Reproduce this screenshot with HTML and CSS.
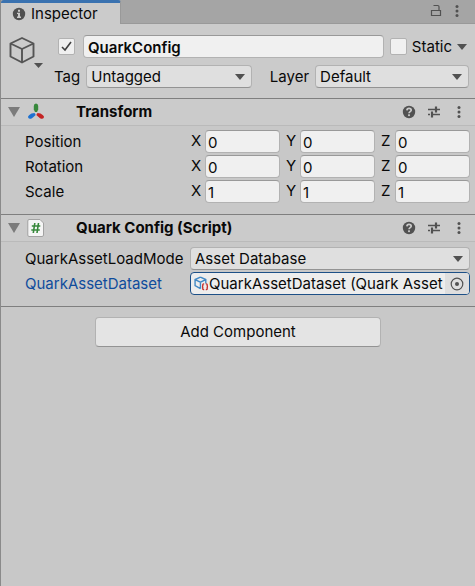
FILE: index.html
```html
<!DOCTYPE html>
<html lang="en">
<head>
<meta charset="utf-8">
<meta name="viewport" content="width=device-width, initial-scale=1">
<title>Inspector</title>
<link rel="stylesheet" href="styles.css">
</head>
<body>
<svg class="defs" aria-hidden="true">
  <symbol id="help" viewBox="0 0 14 14">
    <circle cx="7" cy="7" r="6.2" fill="#515151"/>
    <path d="M4.900 5.400C5 4 5.900 3.400 7 3.400c1.300 0 2.200.7 2.200 1.800C9.200 6.600 7 6.600 7 8.300" fill="none" stroke="#cbcbcb" stroke-width="1.700"/>
    <rect x="6.100" y="9.300" width="1.800" height="1.800" fill="#cbcbcb"/>
  </symbol>
  <symbol id="sliders" viewBox="0 0 14 14">
    <path d="M1 4.500h7M10 4.500h3M1 9.500h2M6 9.500h7" stroke="#515151" stroke-width="1.400"/>
    <path d="M9 1.500v6M5 6.500v6" stroke="#515151" stroke-width="2.200"/>
  </symbol>
  <symbol id="dots" viewBox="0 0 14 14">
    <g fill="#515151"><circle cx="7" cy="2.500" r="1.500"/><circle cx="7" cy="7" r="1.500"/><circle cx="7" cy="11.500" r="1.500"/></g>
  </symbol>
</svg>
<main class="inspector">
  <header class="tabbar">
    <h1 class="tab">
      <svg class="icon tab-icon" viewBox="0 0 14 14" aria-hidden="true"><circle cx="7" cy="7" r="6.200" fill="#515151"/><path d="M6 2.700h2v2H6zM5 5.800h3v3.700h1V11H5V9.500h1V7H5z" fill="#cbcbcb"/></svg>
      Inspector
    </h1>
    <div class="tab-tools">
      <button class="icon-button" type="button" aria-label="Lock"><svg class="icon" viewBox="0 0 14 14"><path d="M2.500 6.500h9v5h-9zM4.500 1.500h4.200q1.300 0 1.300 1.300V6.500" fill="none" stroke="#515151" stroke-width="1.200"/></svg></button>
      <button class="icon-button" type="button" aria-label="Window menu"><svg class="icon"><use href="#dots"/></svg></button>
    </div>
  </header>

  <section class="object">
    <button class="object-icon" type="button" aria-label="Choose icon">
      <svg viewBox="0 0 36 36"><path d="M13 3L24.500 8.500V21.500L13 27.500L1.500 21.500V8.500ZM1.500 8.500L13 14L24.500 8.500M13 14V27.500" fill="none" stroke="#555" stroke-width="1.900" stroke-linejoin="round"/><path d="M25 28h9l-4.500 5z" fill="#515151"/></svg>
    </button>
    <div class="object-fields">
      <div class="name-row">
        <input class="check" type="checkbox" aria-label="Active" checked>
        <input class="field name" type="text" aria-label="Name" value="QuarkConfig">
        <input class="check" type="checkbox" id="static">
        <label class="static-label" for="static">Static</label>
        <button class="arrow-button" type="button" aria-label="Static options"><svg viewBox="0 0 10 6"><path d="M0 0h10L5 6z" fill="#515151"/></svg></button>
      </div>
      <div class="tag-row">
        <label for="tag">Tag</label>
        <select class="select tag" id="tag"><option>Untagged</option></select>
        <label class="layer-label" for="layer">Layer</label>
        <select class="select layer" id="layer"><option>Default</option></select>
      </div>
    </div>
  </section>

  <section class="component">
    <header class="component-head">
      <button class="fold" type="button" aria-label="Collapse Transform"><svg viewBox="0 0 12 10"><path d="M0 0h12L6 10z" fill="#7b7b7b"/></svg></button>
      <svg class="component-icon" viewBox="0 0 18 18" aria-hidden="true"><path d="M9 .5Q11.200.5 11.200 3V6.500L10 9H8L6.800 6.500V3Q6.800.500 9 .5z" fill="#37883b"/><path d="M7.500 10L8.700 12 5 15.200Q2.500 16.500 1.300 15 .3 13.500 2.300 12L4.500 10.500z" fill="#1d71d1"/><path d="M10.500 10L9.300 12l3.700 3.200q2.500 1.300 3.700-.2 1-1.500-1-3L13.500 10.500z" fill="#c42424"/></svg>
      <h2>Transform</h2>
      <button class="icon-button" type="button" aria-label="Help"><svg class="icon"><use href="#help"/></svg></button>
      <button class="icon-button" type="button" aria-label="Presets"><svg class="icon"><use href="#sliders"/></svg></button>
      <button class="icon-button" type="button" aria-label="Menu"><svg class="icon"><use href="#dots"/></svg></button>
    </header>
    <div class="component-body">
      <div class="property"><span class="property-label">Position</span>
        <div class="vector"><label>X<input class="field" value="0"></label><label>Y<input class="field" value="0"></label><label>Z<input class="field" value="0"></label></div></div>
      <div class="property"><span class="property-label">Rotation</span>
        <div class="vector"><label>X<input class="field" value="0"></label><label>Y<input class="field" value="0"></label><label>Z<input class="field" value="0"></label></div></div>
      <div class="property"><span class="property-label">Scale</span>
        <div class="vector"><label>X<input class="field" value="1"></label><label>Y<input class="field" value="1"></label><label>Z<input class="field" value="1"></label></div></div>
    </div>
  </section>

  <section class="component script">
    <header class="component-head">
      <button class="fold" type="button" aria-label="Collapse Quark Config"><svg viewBox="0 0 12 10"><path d="M0 0h12L6 10z" fill="#7b7b7b"/></svg></button>
      <svg class="component-icon" viewBox="0 0 18 18" aria-hidden="true"><path d="M2 .5h11L16.500 4v12q0 1.500-1.500 1.500H2Q.8 17.500.8 16V2Q.8.500 2 .5z" fill="#f5f5f5" stroke="#a2a2a2"/><path d="M7.800 4L6.300 14M11.500 4L10 14M4.800 7h8.500M4.300 11h8.500" stroke="#37883b" stroke-width="1.600"/></svg>
      <h2>Quark Config (Script)</h2>
      <button class="icon-button" type="button" aria-label="Help"><svg class="icon"><use href="#help"/></svg></button>
      <button class="icon-button" type="button" aria-label="Presets"><svg class="icon"><use href="#sliders"/></svg></button>
      <button class="icon-button" type="button" aria-label="Menu"><svg class="icon"><use href="#dots"/></svg></button>
    </header>
    <div class="component-body">
      <div class="property"><label class="property-label" for="mode">QuarkAssetLoadMode</label>
        <select class="select" id="mode"><option>Asset Database</option></select></div>
      <div class="property active"><label class="property-label" for="dataset">QuarkAssetDataset</label>
        <div class="object-field">
          <svg class="asset-icon" viewBox="0 0 14 14" aria-hidden="true"><path d="M6 1L11 3.300V7M6 1L1 3.300V9l5 2.800M1 3.300L6 5.800l5-2.500M6 5.800v6" fill="none" stroke="#4289c5" stroke-width="1.300"/><path d="M9.500 7.300H9q-.8 0-.8.900v1q0 .8-.8.800.8 0 .8.800v1q0 .9.800.9h.5M11 7.300h.5q.8 0 .8.900v1q0 .8.800.8-.8 0-.8.800v1q0 .9-.8.900H11" fill="none" stroke="#c9302c" stroke-width="1.300"/></svg>
          <input class="object-value" id="dataset" value="QuarkAssetDataset (Quark Asset Dataset)" readonly>
          <button class="picker" type="button" aria-label="Select object"><svg viewBox="0 0 14 14"><circle cx="7" cy="7" r="5.800" fill="none" stroke="#515151" stroke-width="1.200"/><circle cx="7" cy="7" r="2" fill="#515151"/></svg></button>
        </div></div>
    </div>
  </section>

  <footer class="actions"><button class="add" type="button">Add Component</button></footer>
</main>
</body>
</html>
```

FILE: styles.css
```css
* { box-sizing: border-box; }

body {
  margin: 0;
  background: #c8c8c8;
  color: #090909;
  font: 15px/22px Inter, "Liberation Sans", sans-serif;
}

button, input, select { font: inherit; color: inherit; margin: 0; }
button { padding: 0; border: 0; background: none; }
h1, h2 { margin: 0; font-size: 15px; }
svg { display: block; }
.defs { position: absolute; width: 0; height: 0; }

.inspector { min-height: 100vh; border-left: 1px solid #8a8a8a; }

.tabbar {
  display: flex;
  justify-content: space-between;
  height: 24px;
  background: #a5a5a5;
  box-shadow: inset 0 -1px #999;
}
.tab {
  display: flex;
  align-items: center;
  gap: 5px;
  padding: 0 22px 0 11px;
  border-top: 3px solid #3a72b0;
  border-right: 1px solid #999;
  border-radius: 3px 3px 0 0;
  background: #cbcbcb;
  font-weight: 400;
}
.tab-tools { display: flex; align-items: center; gap: 7px; padding: 0 11px 2px 0; }
.icon { width: 14px; height: 14px; }
.icon-button { flex: none; }

.object {
  display: flex;
  gap: 13px;
  padding: 11px 6px 10px 8px;
  background: #cbcbcb;
}
.object-icon { flex: none; width: 36px; height: 36px; }
.object-icon svg { width: 36px; height: 36px; }
.object-fields { flex: 1; min-width: 0; display: grid; gap: 7px; }
.name-row, .tag-row { display: flex; align-items: center; }

.check {
  appearance: none;
  flex: none;
  width: 17px;
  height: 17px;
  border: 1px solid #b2b2b2;
  border-radius: 2px;
  background: #f0f0f0;
}
.check:checked {
  background: #f0f0f0 url("data:image/svg+xml,%3Csvg xmlns='http://www.w3.org/2000/svg' viewBox='0 0 15 15'%3E%3Cpath d='M3 8l3 3 6-8' fill='none' stroke='%23404040' stroke-width='1.600'/%3E%3C/svg%3E");
}

.field {
  min-width: 0;
  height: 23px;
  padding: 1px 2px 0;
  border: 1px solid #b2b2b2;
  border-top-color: #999;
  border-radius: 4px;
  background: #f0f0f0;
}
.name { flex: 1; margin: 0 6px 0 8px; padding-left: 4px; font-weight: 600; }
.static-label { margin: 0 5px; }
.arrow-button { margin-right: 2px; }
.arrow-button svg { width: 10px; height: 6px; }

.select {
  appearance: none;
  min-width: 0;
  height: 23px;
  padding: 0 20px 0 4px;
  border: 1px solid #b2b2b2;
  border-bottom-color: #939393;
  border-radius: 4px;
  background: #dfdfdf url("data:image/svg+xml,%3Csvg xmlns='http://www.w3.org/2000/svg' viewBox='0 0 10 6'%3E%3Cpath d='M0 0h10L5 6z' fill='%23515151'/%3E%3C/svg%3E") right 6px center / 10px 6px no-repeat;
}
.tag-row { margin-left: -4px; }
.tag { flex: 167; margin-left: 6px; }
.layer-label { margin: 0 6px 0 18px; }
.layer { flex: 153; }

.component { border-top: 1px solid #7f7f7f; }
.component-head {
  display: flex;
  align-items: center;
  gap: 11px;
  height: 27px;
  padding: 0 9px 0 7px;
  border-bottom: 1px solid #bababa;
  background: #cbcbcb;
}
.component-head h2 { flex: 1; margin-left: 20px; font-weight: 700; }
.fold svg { width: 12px; height: 10px; }
.fold { margin-right: -4px; }
.component-icon { flex: none; width: 18px; height: 18px; }

.component-body { display: grid; gap: 2px; padding: 4px 5px 11px 24px; }
.script .component-body { padding-top: 5px; }
.script { border-bottom: 1px solid #7f7f7f; }
.property {
  display: grid;
  grid-template-columns: 165px minmax(0, 1fr);
  align-items: center;
}
.property-label { white-space: nowrap; }
.vector { display: grid; grid-template-columns: repeat(3, minmax(0, 1fr)); gap: 5px; }
.vector label { display: grid; grid-template-columns: 14px minmax(0, 1fr); padding-left: 1px; }
.active .property-label { color: #0f4c9c; }

.object-field {
  display: flex;
  align-items: center;
  height: 23px;
  padding-left: 3px;
  border: 1px solid #1d5087;
  border-radius: 4px;
  background: #ededed;
  overflow: hidden;
}
.asset-icon { flex: none; width: 15px; height: 15px; }
.object-value { flex: 1; min-width: 0; height: 21px; padding: 1px 0 0; border: 0; background: none; }
.picker { flex: none; display: grid; place-items: center; width: 24px; height: 21px; background: #dedede; }
.picker svg { width: 14px; height: 14px; }

.actions { display: flex; justify-content: center; padding: 10px 0; }
.add {
  width: 60.5%;
  height: 30px;
  border: 1px solid #b2b2b2;
  border-bottom-color: #939393;
  border-radius: 4px;
  background: #e4e4e4;
}
```
